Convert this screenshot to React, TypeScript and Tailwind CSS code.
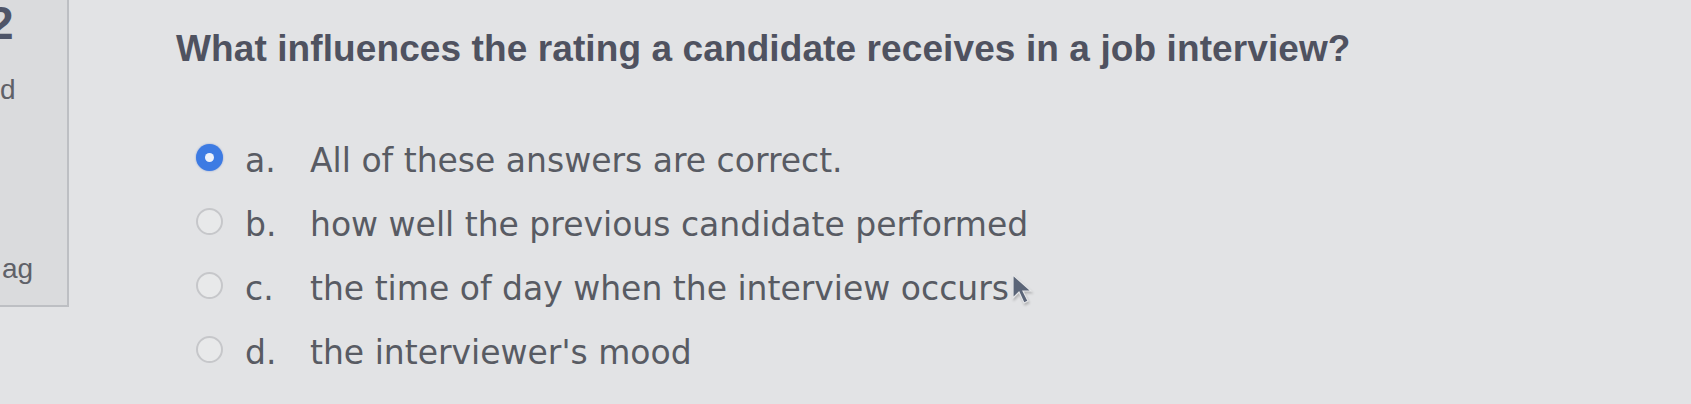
const options = [
  { letter: 'a.', text: 'All of these answers are correct.', checked: true },
  { letter: 'b.', text: 'how well the previous candidate performed', checked: false },
  { letter: 'c.', text: 'the time of day when the interview occurs', checked: false, cursor: true },
  { letter: 'd.', text: "the interviewer's mood", checked: false },
]

function Radio({ checked }: { checked: boolean }) {
  if (checked) {
    return (
      <span className="flex h-[27px] w-[27px] shrink-0 items-center justify-center rounded-full bg-[#3d7be3] shadow-[0_0_2px_rgba(40,90,200,0.5)]">
        <span className="h-[9px] w-[9px] rounded-full bg-[#eef2fb]" />
      </span>
    )
  }
  return <span className="block h-[27px] w-[27px] shrink-0 rounded-full border-2 border-[#c6c7ca] bg-[#e8e9ea]" />
}

function Cursor() {
  return (
    <svg width="24" height="34" viewBox="0 0 24 34" className="ml-[2px] mt-[6px] drop-shadow-[1px_2px_1px_rgba(0,0,0,0.2)]">
      <path d="M2 1 L2 24 L8 18 L13 29 L17 27 L12 17 L20 17 Z" fill="#5b6578" stroke="#e5e6e8" strokeWidth="1.2" />
    </svg>
  )
}

export default function App() {
  return (
    <div
      className="flex h-[404px] w-[1691px] overflow-hidden bg-[#e2e3e5] text-[#585b63]"
      style={{ fontFamily: '"Liberation Sans", Arial, sans-serif' }}
    >
      {/* clipped question info panel */}
      <div className="relative h-[307px] w-[69px] shrink-0 overflow-hidden border-b-2 border-r-2 border-[#bdbfc3] bg-[#dadbdd] text-[#5f6168]">
        <div className="absolute -left-[12px] top-0 text-[46px] font-bold leading-none text-[#4f5568]">2</div>
        <div className="absolute left-0 top-[76px] text-[28px] leading-none">d</div>
        <div className="absolute left-[2px] top-[255px] text-[28px] leading-none">ag</div>
      </div>

      <div className="flex flex-col pl-[107px] pt-[30px]">
        <h1 className="text-[37px] font-bold leading-none tracking-[0.1px] text-[#4f5260]">
          What influences the rating a candidate receives in a job interview?
        </h1>

        <div
          className="mt-[76px] flex flex-col gap-[30px]"
          style={{ fontFamily: '"DejaVu Sans", Verdana, sans-serif' }}
        >
          {options.map((o) => (
            <div key={o.letter} className="flex h-[34px] items-center">
              <div className="ml-[20px] -mt-[6px]">
                <Radio checked={o.checked} />
              </div>
              <span className="ml-[22px] w-[65px] text-[33px] leading-none">{o.letter}</span>
              <span className="text-[33px] leading-none">{o.text}</span>
              {o.cursor && <Cursor />}
            </div>
          ))}
        </div>
      </div>
    </div>
  )
}
